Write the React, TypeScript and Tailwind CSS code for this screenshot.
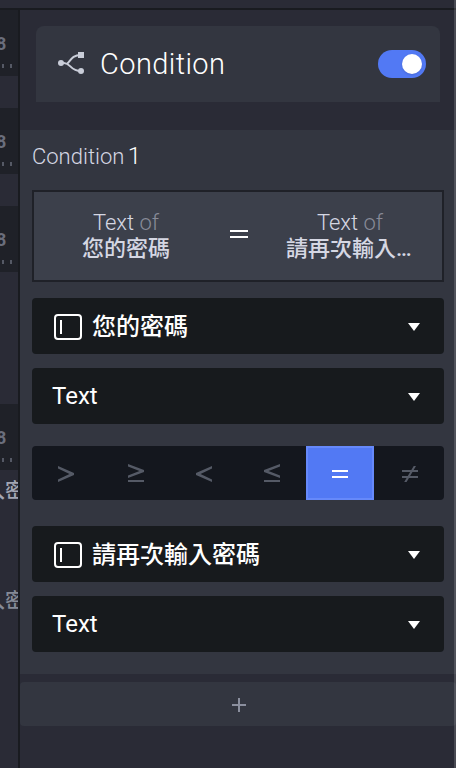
import { useState } from "react";
import clsx from "clsx";

const OPERATORS = [
  {
    id: "gt",
    width: "w-[68px]",
    path: "M17 14 V16.4 L28.5 22 L17 27.6 V30 L33 23 V21 Z",
  },
  {
    id: "gte",
    width: "w-[70px]",
    path: "M18 12 V14.4 L29.5 19 L18 23.6 V26 L34 20 V18 Z M18 28 H34 V30 H18 Z",
  },
  {
    id: "lt",
    width: "w-[68px]",
    path: "M33 14 V16.4 L21.5 22 L33 27.6 V30 L17 23 V21 Z",
  },
  {
    id: "lte",
    width: "w-[68px]",
    path: "M33 12 V14.4 L21.5 19 L33 23.6 V26 L17 20 V18 Z M17 28 H33 V30 H17 Z",
  },
  {
    id: "eq",
    width: "w-[68px]",
    path: "M17 18 H33 V20 H17 Z M17 24 H33 V26 H17 Z",
  },
  {
    id: "neq",
    width: "w-[70px]",
    path: "M18 18 H34 V20 H18 Z M18 24 H34 V26 H18 Z M29.7 14 H32 L22.6 30 H20.2 Z",
  },
];

function BranchIcon() {
  return (
    <svg width="28" height="24" viewBox="0 0 28 24" fill="none">
      <path
        d="M3 11 H6 C13 11 12 19 23 19 M9.5 11.5 C13 8 14 3 23 3"
        stroke="#c9cdd8"
        strokeWidth="2"
      />
      <circle cx="3" cy="11" r="3" fill="#c9cdd8" />
      <circle cx="23" cy="19" r="3" fill="#c9cdd8" />
      <rect x="20" y="0" width="6" height="6" fill="#c9cdd8" />
    </svg>
  );
}

function InputIcon() {
  return (
    <svg width="28" height="26" viewBox="0 0 28 26" fill="none" stroke="#fff">
      <rect x="1" y="1" width="26" height="24" rx="3" strokeWidth="2" />
      <path d="M7 6 V20" strokeWidth="2" />
    </svg>
  );
}

function Select({ label, icon }: { label: string; icon?: boolean }) {
  return (
    <button
      className={clsx(
        "flex h-14 w-full items-center rounded bg-[#171a1d] pr-6 text-2xl leading-[28px] text-white",
        icon ? "pl-[22px] font-medium" : "pl-5"
      )}
    >
      {icon && (
        <span className="mt-[2px] mr-2.5">
          <InputIcon />
        </span>
      )}
      <span className={clsx("flex-1 text-left", icon && "pt-[2px]")}>{label}</span>
      <svg className="mt-[2px]" width="12" height="8" viewBox="0 0 12 8">
        <path d="M0 0 H12 L6 8 Z" fill="#fff" />
      </svg>
    </button>
  );
}

function Operand({ name }: { name: string }) {
  return (
    <div className="w-[184px] text-center text-[22px] leading-[26px] text-[#d5d7e3]">
      <div className="font-[350]">
        Text <span className="text-[#888b98]">of</span>
      </div>
      <div className="mx-auto w-[128px] truncate font-medium">{name}</div>
    </div>
  );
}

function TrackHead() {
  return (
    <div className="h-[66px] overflow-hidden bg-[#1f2128] pt-[22px]">
      <div className="-ml-1 text-[18px] leading-6 font-bold text-[#6a6e7c]">8</div>
      <div className="mt-2 ml-[2px] flex gap-[6px]">
        <i className="h-1 w-[2px] bg-[#555965]" />
        <i className="h-1 w-[2px] bg-[#555965]" />
      </div>
    </div>
  );
}

function Timeline() {
  return (
    <div className="w-5 shrink-0 overflow-hidden border-r-2 border-[#191b20]">
      <TrackHead />
      <div className="h-8" />
      <TrackHead />
      <div className="h-8" />
      <TrackHead />
      <div className="h-[132px]" />
      <TrackHead />
      <div className="mt-[9px] -ml-[15px] text-[20px] leading-6 font-medium whitespace-nowrap text-[#a3a6b3]">
        入密碼
      </div>
      <div className="mt-[86px] -ml-[15px] text-[20px] leading-6 font-medium whitespace-nowrap text-[#858a97]">
        入密碼
      </div>
    </div>
  );
}

export default function App() {
  const [enabled, setEnabled] = useState(true);
  const [operator, setOperator] = useState("eq");

  return (
    <div className="relative flex h-[768px] w-[456px] flex-col overflow-hidden bg-[#2a2b36] font-['Roboto','Noto_Sans_CJK_TC',sans-serif]">
      <div className="h-[10px] shrink-0 border-b-2 border-[#191b20]" />
      <div className="flex flex-1">
        <Timeline />
        <div className="flex-1 pt-4">
          <div className="mr-4 ml-4 flex h-[76px] items-center rounded-t-lg bg-[#333640] pr-[14px] pl-[22px]">
            <BranchIcon />
            <h1 className="ml-[14px] flex-1 text-[29px] leading-9 font-[350] tracking-[0.4px] text-white">
              Condition
            </h1>
            <button
              onClick={() => setEnabled(!enabled)}
              className={clsx(
                "flex h-7 w-12 items-center rounded-full px-1",
                enabled ? "justify-end bg-[#5279f4]" : "bg-[#171a1d]"
              )}
            >
              <span className="size-5 rounded-full bg-white shadow" />
            </button>
          </div>

          <div className="mt-7 h-[544px] bg-[#333640] pr-3 pl-3">
            <div className="h-10 pt-3 text-[22px] leading-7 font-[350] text-[#d5d7e3]">
              Condition <span className="-ml-[2px] text-2xl leading-7 text-white">1</span>
            </div>

            <div className="mt-5 flex h-[92px] items-center justify-between border-2 border-[#1f2128] bg-[#3c404b]">
              <Operand name="您的密碼" />
              <svg className="mb-1 ml-[2px]" width="18" height="8" viewBox="0 0 18 8">
                <path d="M0 1 H18 M0 7 H18" stroke="#fff" strokeWidth="2" />
              </svg>
              <Operand name="請再次輸入密碼" />
            </div>

            <div className="mt-4 flex flex-col gap-[14px]">
              <Select icon label="您的密碼" />
              <Select label="Text" />
            </div>

            <div className="mt-[22px] mb-[26px] flex h-[54px] overflow-hidden rounded bg-[#14171e]">
              {OPERATORS.map((op) => (
                <button
                  key={op.id}
                  onClick={() => setOperator(op.id)}
                  className={clsx(
                    "flex items-center justify-center",
                    op.width,
                    operator === op.id
                      ? "border-2 border-[#6689fa] bg-[#5279f4] text-white"
                      : "text-[#555a66]"
                  )}
                >
                  <svg width="50" height="42" viewBox="0 0 50 42">
                    <path d={op.path} fill="currentColor" />
                  </svg>
                </button>
              ))}
            </div>

            <div className="flex flex-col gap-[14px]">
              <Select icon label="請再次輸入密碼" />
              <Select label="Text" />
            </div>
          </div>

          <button className="mt-2 flex h-11 w-full items-center justify-center rounded-sm bg-[#333640] pt-[2px] pl-[2px]">
            <svg width="14" height="14" viewBox="0 0 14 14">
              <path d="M7 0 V14 M0 7 H14" stroke="#8b8f9e" strokeWidth="2" />
            </svg>
          </button>
        </div>
      </div>
      {/* scrollbar edge */}
      <div className="absolute inset-y-0 right-0 w-[2px] bg-white/15" />
    </div>
  );
}
